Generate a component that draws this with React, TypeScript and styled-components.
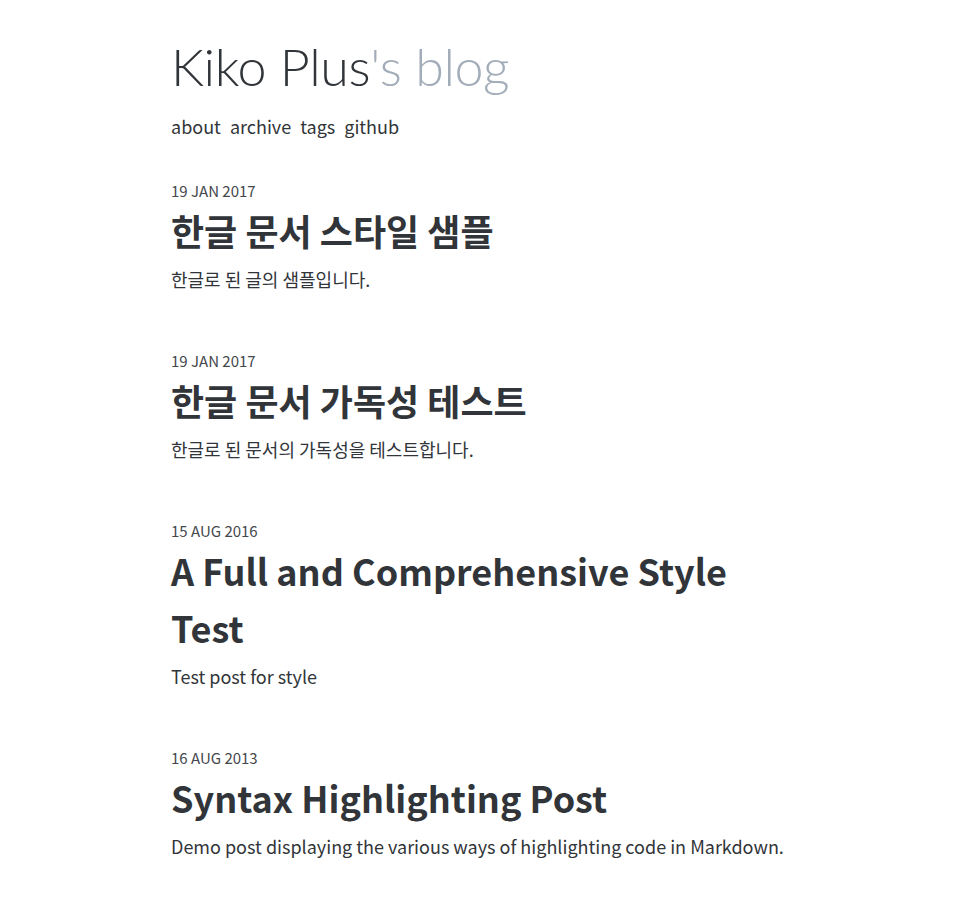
import React from "react";
import styled, { createGlobalStyle } from "styled-components";

const Global = createGlobalStyle`
  html, body { margin: 0; padding: 0; background: #fff; }
  body {
    font-family: "Noto Sans CJK KR", "Noto Sans", sans-serif;
    color: #313539;
    -webkit-font-smoothing: antialiased;
  }
`;

const Container = styled.div`
  width: 627px;
  margin: 0 auto;
  padding-top: 33px;
`;

const Header = styled.header`
  display: flex;
  flex-direction: column;
`;

const SiteTitle = styled.h1`
  margin: 0;
  font-family: Lato, "Noto Sans", sans-serif;
  font-weight: 300;
  font-size: 52px;
  line-height: 66px;
  color: #313539;
  letter-spacing: -0.4px;
`;

const Light = styled.span`
  color: #a3adb9;
`;

const Nav = styled.nav`
  display: flex;
  gap: 9px;
  margin-top: 15px;
`;

const NavLink = styled.a`
  font-size: 18px;
  line-height: 24px;
  color: #313539;
  text-decoration: none;
`;

const PostList = styled.main`
  display: flex;
  flex-direction: column;
  gap: 59px;
  margin-top: 42px;
`;

const Post = styled.article`
  display: flex;
  flex-direction: column;
`;

const PostDate = styled.div`
  font-size: 15px;
  line-height: 22px;
  text-transform: uppercase;
  color: #44484c;
`;

const PostTitle = styled.h2`
  margin: 0;
  font-size: 36px;
  font-weight: 700;
  line-height: 57px;
  color: #313539;
`;

const PostDesc = styled.p`
  margin: 8px 0 0;
  font-size: 18px;
  line-height: 24px;
  color: #313539;
`;

const posts = [
  { date: "19 Jan 2017", title: "한글 문서 스타일 샘플", desc: "한글로 된 글의 샘플입니다." },
  { date: "19 Jan 2017", title: "한글 문서 가독성 테스트", desc: "한글로 된 문서의 가독성을 테스트합니다." },
  { date: "15 Aug 2016", title: "A Full and Comprehensive Style Test", desc: "Test post for style" },
  { date: "16 Aug 2013", title: "Syntax Highlighting Post", desc: "Demo post displaying the various ways of highlighting code in Markdown." },
];

export default function App() {
  return (
    <>
      <Global />
      <Container>
        <Header>
          <SiteTitle>
            Kiko Plus<Light>'s blog</Light>
          </SiteTitle>
          <Nav>
            <NavLink href="#">about</NavLink>
            <NavLink href="#">archive</NavLink>
            <NavLink href="#">tags</NavLink>
            <NavLink href="#">github</NavLink>
          </Nav>
        </Header>
        <PostList>
          {posts.map((p, i) => (
            <Post key={i}>
              <PostDate>{p.date}</PostDate>
              <PostTitle>{p.title}</PostTitle>
              <PostDesc>{p.desc}</PostDesc>
            </Post>
          ))}
        </PostList>
      </Container>
    </>
  );
}
